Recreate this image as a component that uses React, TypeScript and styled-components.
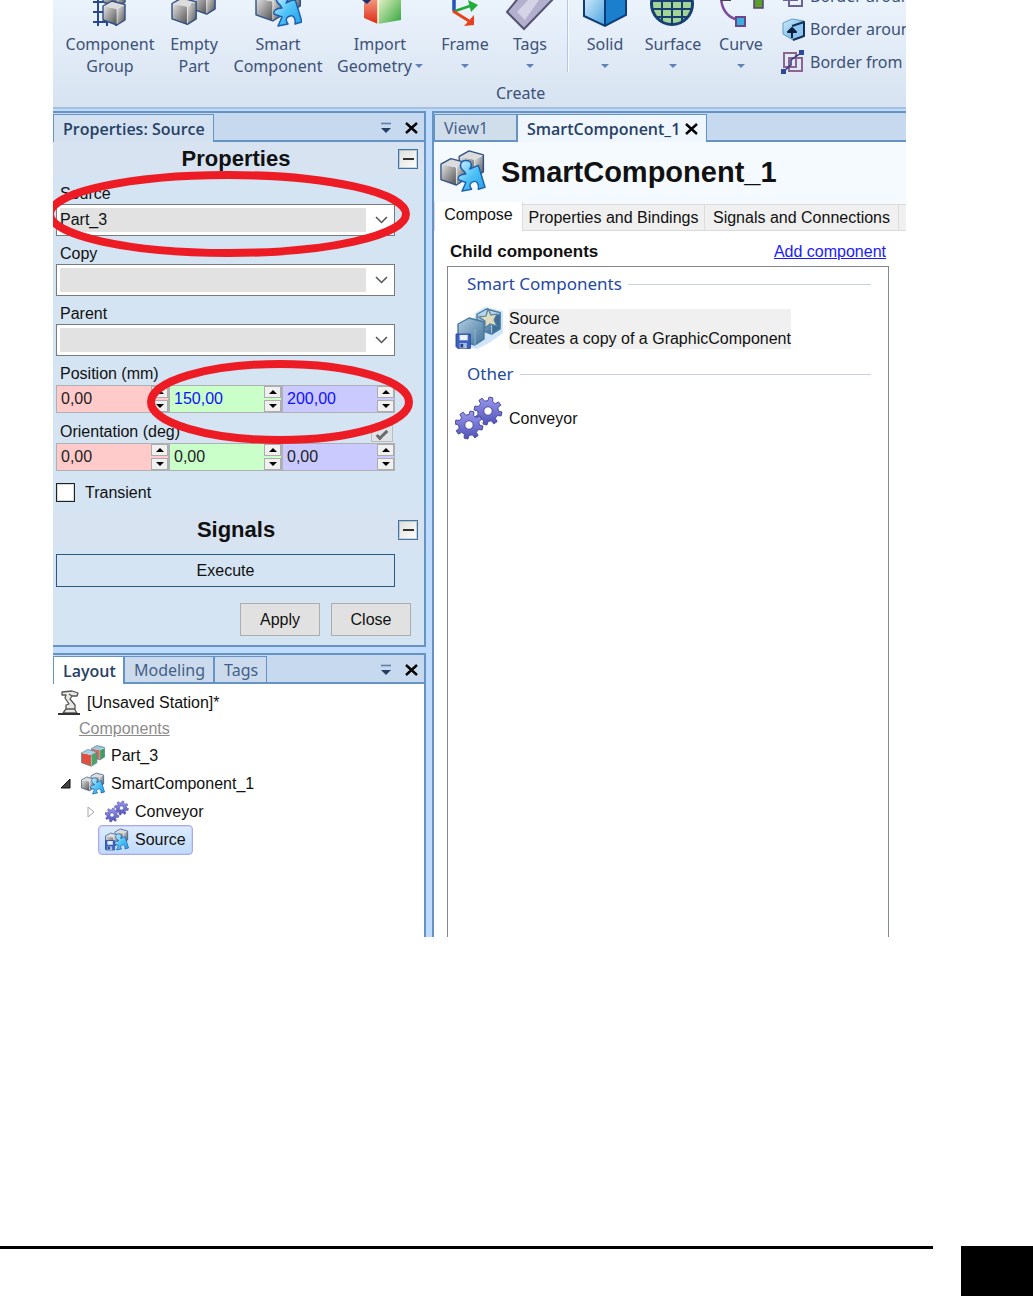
import React from "react";
import styled, { createGlobalStyle } from "styled-components";

const ui = '"Liberation Sans", Arial, sans-serif';
const ribbonFont = '"Noto Sans", "Open Sans", sans-serif';
const edge = "#6593c4";

const Global = createGlobalStyle`
  *, *::before, *::after { box-sizing: border-box; }
  body { margin: 0; background: #fff; color: #111; font: 16px/20px ${ui}; }
  button, input, select { font: inherit; color: inherit; margin: 0; }
  button { padding: 0; border: 0; background: none; }
  svg { display: block; flex: none; }
`;

const Page = styled.div`
  min-height: 100vh;
  display: flex;
  flex-direction: column;
  justify-content: space-between;
`;
const Shot = styled.main`
  margin: 0 127px 0 53px;
  overflow: hidden;
  background: #bfdbff;
`;

/* ---------- ribbon ---------- */
const Ribbon = styled.header`
  height: 109px;
  border-bottom: 2px solid #a9bfdb;
  background: linear-gradient(#ebf3fc, #d7e3f1);
  font: 16px/22px ${ribbonFont};
  color: #3c5178;
`;
const RibbonItems = styled.div`
  display: flex;
  gap: 12px;
  height: 82px;
  padding-left: 12px;
`;
const RibbonButton = styled.button<{ $w: number }>`
  flex: none;
  display: flex;
  flex-direction: column;
  align-items: center;
  width: ${(p) => p.$w}px;
  white-space: nowrap;
`;
const RibbonLine = styled.span`
  display: flex;
  align-items: center;
  gap: 3px;
  height: 22px;
`;
const Separator = styled.div`
  width: 2px;
  height: 72px;
  flex: none;
  background: linear-gradient(90deg, #b4c6e0 50%, #f6faff 50%);
`;
const BorderList = styled.div`
  display: flex;
  flex-direction: column;
  justify-content: flex-end;
  padding: 0 0 4px 4px;
`;
const BorderButton = styled.button`
  flex: none;
  display: flex;
  align-items: center;
  gap: 5px;
  height: 33px;
  white-space: nowrap;
`;
const RibbonCaption = styled.div`
  padding-left: 443px;
`;

/* ---------- docked panels ---------- */
const Workspace = styled.div`
  display: flex;
  gap: 6px;
  padding-top: 2px;
`;
const LeftDock = styled.div`
  flex: none;
  width: 373px;
  display: flex;
  flex-direction: column;
  gap: 6px;
`;
const Panel = styled.section<{ $grow?: boolean }>`
  position: relative;
  flex: ${(p) => (p.$grow ? 1 : "none")};
  border: 2px solid ${edge};
  border-width: ${(p) => (p.$grow ? "2px 2px 0 0" : "2px 2px 2px 0")};
  background: ${(p) => (p.$grow ? "#fff" : "#d4e4f3")};
`;
const Strip = styled.div`
  display: flex;
  align-items: flex-end;
  height: 29px;
  border-bottom: 2px solid ${edge};
  background: #c7d9ee;
  font: 16px/24px ${ribbonFont};
  color: #465f88;
`;
const DockTab = styled.button<{ $active?: boolean; $w?: number; $tint?: string }>`
  display: flex;
  align-items: center;
  gap: 5px;
  margin-bottom: ${(p) => (p.$active ? "-2px" : "0")};
  padding: 0 8px 0 9px;
  height: ${(p) => (p.$active ? 28 : 26)}px;
  width: ${(p) => (p.$w ? p.$w + "px" : "auto")};
  border: 1px solid ${edge};
  border-bottom: 0;
  background: ${(p) => p.$tint || "#cbdbed"};
  font-family: ${(p) => (p.$active ? '"Open Sans", sans-serif' : "inherit")};
  font-weight: ${(p) => (p.$active ? 600 : 400)};
  color: ${(p) => (p.$active ? "#274166" : "#465f88")};
  white-space: nowrap;
  & + & { border-left-width: ${(p) => (p.$active ? 1 : 0)}px; }
`;
const StripTools = styled.div`
  display: flex;
  align-items: center;
  gap: 13px;
  height: 25px;
  margin-left: auto;
  padding-right: 6px;
`;

/* ---------- property form ---------- */
const SectionHead = styled.div`
  display: grid;
  grid-template-columns: 1fr 20px;
  align-items: center;
  height: 34px;
  padding-right: 6px;
  background: #d8e3f2;
`;
const SectionTitle = styled.h2`
  margin: 0;
  padding-left: 21px;
  text-align: center;
  font: bold 22px/30px ${ui};
`;
const Collapse = styled.button`
  width: 20px;
  height: 20px;
  display: grid;
  place-items: center;
  border: 1px solid #3f74a5;
  outline: 1px solid #3f74a544;
  outline-offset: -2px;
  background: linear-gradient(135deg, #dededa, #fff);
`;
const Form = styled.div`
  padding: 0 29px 0 3px;
`;
const FieldLabel = styled.label`
  display: block;
  height: 28px;
  padding: 8px 4px 0;
`;
const LabelRow = styled.div`
  display: flex;
  justify-content: space-between;
  align-items: flex-end;
  height: 28px;
  padding-right: 2px;
`;
const ComboFrame = styled.div`
  display: flex;
  align-items: center;
  height: 32px;
  padding: 2px 6px 2px 3px;
  border: 1px solid #7a7a7a;
  background: #fff;
`;
const Combo = styled.select`
  appearance: none;
  flex: 1;
  min-width: 0;
  height: 24px;
  margin-right: 9px;
  padding: 0;
  border: 0;
  border-radius: 0;
  background: #e2e2e2;
`;
const Triple = styled.div`
  display: grid;
  grid-template-columns: repeat(3, 1fr);
  height: 30px;
  padding: 1px 0;
`;
const Spin = styled.div<{ $bg: string }>`
  display: flex;
  border: 1px solid #aeb0b2;
  background: ${(p) => p.$bg};
`;
const SpinInput = styled.input<{ $blue?: boolean }>`
  flex: 1;
  width: 0;
  padding: 0 0 0 4px;
  border: 0;
  background: transparent;
  color: ${(p) => (p.$blue ? "#1010ff" : "#222")};
`;
const SpinButtons = styled.div`
  display: flex;
  flex-direction: column;
  justify-content: space-between;
  width: 17px;
`;
const SpinButton = styled.button`
  display: grid;
  place-items: center;
  height: 12px;
  border: 1px solid #acacac;
  background: #f0f0f0;
`;
const Check = styled.input`
  appearance: none;
  width: 19px;
  height: 19px;
  border: 1px solid #222;
  outline: 1px solid #8b8b8b55;
  outline-offset: -2px;
  background: #fff;
`;
const LockCheck = styled.input`
  appearance: none;
  width: 22px;
  height: 17px;
  border: 1px solid #bcbcbc;
  background: #dfe3e8;
  display: grid;
  place-items: center;
  &::after {
    content: "";
    width: 12px;
    height: 6px;
    border: solid #6b6b6b;
    border-width: 0 0 3px 3px;
    transform: rotate(-45deg);
  }
`;
const CheckRow = styled.label`
  display: flex;
  align-items: center;
  gap: 10px;
  height: 41px;
`;
const Execute = styled.button`
  display: block;
  width: 100%;
  height: 33px;
  margin-top: 7px;
  border: 1px solid #2b5a86;
  background: #d4e4f3;
`;
const Actions = styled.div`
  display: flex;
  justify-content: flex-end;
  gap: 11px;
  padding: 16px 13px 9px;
`;
const PushButton = styled.button`
  width: 80px;
  height: 33px;
  border: 1px solid #adadad;
  background: #e1e1e1;
`;
const Marker = styled.svg<{ $x: number; $y: number }>`
  position: absolute;
  left: ${(p) => p.$x}px;
  top: ${(p) => p.$y}px;
  pointer-events: none;
`;

/* ---------- layout tree ---------- */
const Tree = styled.ul`
  list-style: none;
  margin: 0;
  padding: 6px 0 83px;
`;
const Node = styled.li<{ $indent: number; $h?: number }>`
  display: flex;
  align-items: center;
  gap: 6px;
  height: ${(p) => p.$h || 28}px;
  padding-left: ${(p) => p.$indent}px;
`;
const Heading = styled.span`
  color: #8c8c8c;
  text-decoration: underline;
`;
const Selected = styled.span`
  display: flex;
  align-items: center;
  gap: 6px;
  height: 30px;
  padding: 0 6px;
  border: 1px solid #a9a9f2;
  outline: 1px solid #b3b3f566;
  outline-offset: -2px;
  border-radius: 4px;
  background: linear-gradient(#dcebfc, #c1dbfc);
`;

/* ---------- smart component editor ---------- */
const Editor = styled.section`
  flex: 1;
  min-width: 0;
  display: flex;
  flex-direction: column;
  border: 2px solid ${edge};
  border-width: 2px 0 0 2px;
  background: #fff;
`;
const TitleBar = styled.div`
  display: flex;
  align-items: center;
  gap: 15px;
  height: 60px;
  padding-left: 6px;
  background: #f5faff;
`;
const Title = styled.h1`
  margin: 0;
  font: bold 29px/36px ${ui};
`;
const Tabs = styled.div`
  display: flex;
  align-items: flex-end;
  height: 29px;
  overflow: hidden;
  background: #f5faff;
`;
const Tab = styled.button<{ $active?: boolean; $w: number }>`
  flex: none;
  width: ${(p) => p.$w}px;
  height: ${(p) => (p.$active ? 31 : 27)}px;
  padding-bottom: ${(p) => (p.$active ? 2 : 0)}px;
  border: 1px solid #dcdcdc;
  border-left-width: ${(p) => (p.$active ? 1 : 0)}px;
  border-bottom-width: ${(p) => (p.$active ? 0 : 1)}px;
  background: ${(p) => (p.$active ? "#fff" : "#f0f0f0")};
  white-space: nowrap;
`;
const ChildHead = styled.div`
  display: flex;
  justify-content: space-between;
  align-items: center;
  height: 35px;
  padding: 6px 20px 0 16px;
`;
const ChildTitle = styled.h3`
  margin: 0;
  font: bold 17px/20px ${ui};
`;
const AddLink = styled.a`
  color: #1a1aff;
`;
const ListBox = styled.div`
  flex: 1;
  margin: 0 17px 0 13px;
  padding: 6px 17px 0 7px;
  border: 1px solid #828790;
  border-bottom: 0;
`;
const GroupName = styled.div`
  display: flex;
  align-items: center;
  gap: 6px;
  height: 22px;
  padding-left: 12px;
  font: 17px/22px ${ribbonFont};
  color: #2449a3;
  &::after {
    content: "";
    flex: 1;
    height: 1px;
    background: #c5d1e8;
  }
`;
const Entry = styled.div`
  display: flex;
  align-items: center;
  gap: 6px;
  height: 68px;
`;
const EntryText = styled.div<{ $on?: boolean }>`
  background: ${(p) => (p.$on ? "#f0f0f0" : "transparent")};
  white-space: nowrap;
`;

/* ---------- page footer ---------- */
const Footer = styled.footer`
  display: flex;
  gap: 28px;
`;
const Rule = styled.div`
  flex: 1;
  height: 3px;
  background: #000;
`;
const PageMark = styled.div`
  width: 72px;
  height: 50px;
  background: #000;
`;

/* ---------- drawings ---------- */
const DefsSvg = styled.svg`
  position: absolute;
`;
const Defs = () => (
  <DefsSvg width="0" height="0" aria-hidden="true">
    <defs>
      <linearGradient id="grey" x1="0" y1="0" x2="1" y2="1">
        <stop offset="0" stopColor="#e6e6e6" />
        <stop offset="1" stopColor="#505050" />
      </linearGradient>
      <linearGradient id="cyan" x1="0" y1="0" x2="1" y2="1">
        <stop offset="0" stopColor="#d8f4ff" />
        <stop offset=".5" stopColor="#4fc2f7" />
        <stop offset="1" stopColor="#1f9fe8" />
      </linearGradient>
      <linearGradient id="steel" x1="0" y1="0" x2="1" y2="1">
        <stop offset="0" stopColor="#b4cfe2" />
        <stop offset="1" stopColor="#40719a" />
      </linearGradient>
      <linearGradient id="sky" x1="0" y1="0" x2="1" y2="1">
        <stop offset="0" stopColor="#d4ecfb" />
        <stop offset="1" stopColor="#4aa3e0" />
      </linearGradient>
      <linearGradient id="red" x1="0" y1="0" x2="0" y2="1">
        <stop offset="0" stopColor="#f3a78c" />
        <stop offset="1" stopColor="#dd2a14" />
      </linearGradient>
      <linearGradient id="green" x1="0" y1="0" x2="1" y2="1">
        <stop offset="0" stopColor="#f2f6cf" />
        <stop offset="1" stopColor="#2ea53c" />
      </linearGradient>
      <linearGradient id="violet" x1="0" y1="0" x2="0" y2="1">
        <stop offset="0" stopColor="#9a9af0" />
        <stop offset="1" stopColor="#5151b8" />
      </linearGradient>
    </defs>
  </DefsSvg>
);

type CubeProps = { x: number; y: number; s: number; left?: string; right?: string; top?: string; line?: string };
const Cube = ({ x, y, s, left = "url(#grey)", right = "url(#grey)", top = "#dcdcdc", line = "#2f4f86" }: CubeProps) => (
  <g transform={`translate(${x} ${y}) scale(${s})`} stroke={line} strokeWidth={1.4 / s} strokeLinejoin="round">
    <path d="M0 5L14 8V24L0 19Z" fill={left} strokeWidth="0" />
    <path d="M14 8L22 4V19L14 24Z" fill={right} strokeWidth="0" />
    <path d="M0 5L9 0L22 3L14 8Z" fill={top} strokeWidth="0" />
    <path d="M14 8V24" stroke="#ffffff88" strokeWidth={1 / s} />
    <path d="M0 5L9 0L22 3.5V19L14 24L0 19Z" fill="none" />
  </g>
);

const Puzzle = () => (
  <path
    d="M25 22C20 19 20 11 27 11C33 11 34 16 31 20L40 16L47 39L40 41C41 35 38 32 35 33C31 34 30 37 33 41L23 43L27 34L19 31C18 28 21 25 27 25Z"
    fill="url(#cyan)"
    stroke="#1d5fae"
    strokeWidth="1.5"
    strokeLinejoin="round"
  />
);

const Disk = ({ x, y, s = 1 }: { x: number; y: number; s?: number }) => (
  <g transform={`translate(${x} ${y}) scale(${s})`}>
    <path d="M0 0H16V16H2L0 14Z" fill="#3b62bd" stroke="#2746a0" />
    <path d="M4 1H13V7H4Z" fill="#e9f0ff" />
    <path d="M4 10H12V16H4Z" fill="#a9bddf" />
    <path d="M5 11H8V15H5Z" fill="#27407f" />
  </g>
);

const SmartIcon = ({ size, disk }: { size: number; disk?: boolean }) => (
  <svg width={size} height={size} viewBox="0 0 48 46" aria-hidden="true">
    <Cube x={20} y={1} s={1.15} />
    <Cube x={1} y={9} s={1.15} />
    <Puzzle />
    {disk && <Disk x={0} y={24} s={1.2} />}
  </svg>
);

const gearPath = (cx: number, cy: number, r: number) => {
  const n = 8;
  const pts: string[] = [];
  for (let i = 0; i < n; i++) {
    const a = (i / n) * Math.PI * 2;
    const w = (Math.PI * 2) / n;
    [[0, 0.74], [0.1, 1], [0.46, 1], [0.58, 0.74]].forEach(([t, k]) => {
      pts.push(`${(cx + Math.cos(a + t * w) * r * k).toFixed(1)} ${(cy + Math.sin(a + t * w) * r * k).toFixed(1)}`);
    });
  }
  const h = r * 0.3;
  return `M${pts.join("L")}ZM${cx - h} ${cy}a${h} ${h} 0 1 0 ${2 * h} 0a${h} ${h} 0 1 0 ${-2 * h} 0Z`;
};
const Gears = ({ size }: { size: number }) => (
  <svg width={size} height={size} viewBox="0 0 48 48" aria-hidden="true">
    <g fill="url(#violet)" fillRule="evenodd" stroke="#4a4a9c" strokeWidth="1">
      <path d={gearPath(33, 16, 14)} />
      <path d={gearPath(14, 30, 14)} />
    </g>
  </svg>
);

const SourceIcon = () => (
  <svg width="48" height="44" viewBox="0 0 48 44" aria-hidden="true">
    <path d="M20 6L30 0L48 4V26L34 36L22 42L14 40Z" fill="#cfe6fa" />
    <Cube x={22} y={2} s={1.05} left="url(#steel)" right="#3f6f99" top="#b9d5e8" line="#47799f" />
    <path d="M3 17L14 11L29 15V32L20 38L3 33Z" fill="url(#steel)" stroke="#47799f" strokeWidth="1.4" strokeLinejoin="round" />
    <path d="M20 22V38" fill="none" stroke="#8fb3cc" />
    <path d="M33 2L36 8L42 7L39 13L42 19L35 17L30 21L30 14L24 10L31 9Z" fill="#dfdcc0" stroke="#55809d" strokeWidth="1.2" />
    <Disk x={1} y={27} s={0.9} />
  </svg>
);

const PartIcon = () => (
  <svg width="24" height="22" viewBox="0 0 48 44" aria-hidden="true">
    <Cube x={21} y={1} s={1.2} left="#e0645a" right="#3f9f63" top="#9fc6dc" line="#4f7f92" />
    <Cube x={1} y={9} s={1.4} left="#e0503f" right="#4aa56b" top="#a9d4e8" line="#4f7f92" />
  </svg>
);

const RobotIcon = () => (
  <svg width="24" height="26" viewBox="0 0 24 26" fill="#e8e8e4" stroke="#555" strokeWidth="1.3" strokeLinejoin="round" aria-hidden="true">
    <path d="M5 2L15 1L21 3L20 6L15 6L13 9L18 15V20L20 23H6L9 19V15L12 14L8 8L9 5L5 5Z" />
    <path d="M12 4L15 6M9 19H18" />
    <path d="M1 24H23" stroke="#333" strokeWidth="2" />
  </svg>
);

const Down = ({ w = 8, fill = "#5f83b8" }: { w?: number; fill?: string }) => (
  <svg width={w} height={w / 2} viewBox="0 0 8 4" aria-hidden="true"><path d="M0 0H8L4 4Z" fill={fill} /></svg>
);
const Cross = () => (
  <svg width="13" height="12" viewBox="0 0 13 12" aria-hidden="true">
    <path d="M1 1L12 11M12 1L1 11" stroke="#000" strokeWidth="2.4" />
  </svg>
);
const DockMenu = () => (
  <svg width="12" height="12" viewBox="0 0 12 12" aria-hidden="true">
    <path d="M1 1.500H11" stroke="#5f7fa8" strokeWidth="1.6" />
    <path d="M1 6H11L6 11Z" fill="#233f66" />
  </svg>
);
const Chevron = () => (
  <svg width="13" height="8" viewBox="0 0 13 8" aria-hidden="true">
    <path d="M1 1L6.500 6.500L12 1" fill="none" stroke="#555" strokeWidth="1.5" />
  </svg>
);

const Big = ({ children }: { children: React.ReactNode }) => (
  <svg width="48" height="33" viewBox="0 0 48 33" aria-hidden="true">{children}</svg>
);
const icons = {
  group: (
    <Big>
      <path d="M12 0V26M21 20V26M30 20V26M7 2H18M7 12H18M7 22H20" stroke="#27488c" strokeWidth="2" fill="none" />
      <Cube x={17} y={-17} s={1} />
      <Cube x={17} y={1} s={1} />
    </Big>
  ),
  empty: (
    <Big>
      <Cube x={22} y={-11} s={1.05} />
      <Cube x={2} y={-2} s={1.1} />
    </Big>
  ),
  smart: (
    <Big>
      <g transform="translate(1 -17)">
        <Cube x={20} y={1} s={1.15} />
        <Cube x={1} y={9} s={1.2} />
        <Puzzle />
      </g>
    </Big>
  ),
  geometry: (
    <Big>
      <path d="M8 -4L22 0V24L8 18Z" fill="url(#red)" />
      <path d="M22 -4H45V20L22 24Z" fill="url(#green)" />
      <path d="M22 0V24" stroke="#fbf7d8" strokeWidth="1.5" />
      <path d="M6 0L11 4L15 0V-2H6Z" fill="#17306f" />
    </Big>
  ),
  frame: (
    <Big>
      <path d="M13 -2V11" stroke="#2351bd" strokeWidth="3.5" />
      <path d="M14 11L29 6" stroke="#1fa838" strokeWidth="2.6" />
      <path d="M27 0L37 5L30 12Z" fill="#1fae38" />
      <path d="M12 11L28 21" stroke="#e8401b" strokeWidth="3" />
      <path d="M33 15L33 25L23 26Z" fill="#e8401b" />
    </Big>
  ),
  tag: (
    <Big>
      <path d="M1 12L14 -4H50L18 29Z" fill="#b3b0cd" stroke="#565372" strokeWidth="2" />
      <path d="M11 12L22 0H33L19 20Z" fill="#d5d3e6" />
    </Big>
  ),
  solid: (
    <Big>
      <path d="M3 -4H24V26L3 16Z" fill="url(#sky)" />
      <path d="M24 -4H45V15L24 26Z" fill="#1b7fcd" />
      <path d="M3 -4V16L24 26L45 15V-4M24 -4V26" fill="none" stroke="#0d3c78" strokeWidth="2" />
    </Big>
  ),
  surface: (
    <Big>
      <circle cx="23" cy="4" r="20.5" fill="#a4d396" stroke="#164073" strokeWidth="3" />
      <path d="M3 1H43M4 9H42M8 17H38M13 -2V22M23 -2V25M33 -2V22" stroke="#164073" strokeWidth="2" fill="none" />
    </Big>
  ),
  curve: (
    <Big>
      <path d="M4 -2C5 12 12 18 22 20" fill="none" stroke="#7b4a9a" strokeWidth="2.5" />
      <path d="M4 0H14" stroke="#444" strokeWidth="2" />
      <path d="M37 -2H46V8H37Z" fill="#57a02c" stroke="#5b3f78" strokeWidth="1.5" />
      <path d="M19 17H28V26H19Z" fill="#3badd9" stroke="#6a4590" strokeWidth="2" />
    </Big>
  ),
};

const Overlap = () => (
  <svg width="24" height="24" viewBox="0 0 24 24" fill="none" stroke="#6d6296" strokeWidth="2" aria-hidden="true">
    <path d="M3 3H16V16H3ZM8 8H21V22H8Z" />
  </svg>
);
const BorderCube = () => (
  <svg width="24" height="24" viewBox="0 0 24 24" strokeLinejoin="round" aria-hidden="true">
    <path d="M2 6L11 2L23 4V19L12 23L2 17Z" fill="url(#sky)" stroke="#5b9ccc" />
    <path d="M11 9L23 5V19L12 23" fill="#8ec4ee" stroke="#132f55" strokeWidth="2" />
    <path d="M11 21V14M7 15L11 11L15 15Z" fill="#0c2040" stroke="#0c2040" strokeWidth="2" />
  </svg>
);
const BorderPoints = () => (
  <svg width="24" height="24" viewBox="0 0 24 24" fill="none" aria-hidden="true">
    <path d="M3 3H15V17H3ZM8 8H21V21H8Z" stroke="#8d6490" strokeWidth="2" />
    <path d="M3 21L10 15V10L20 3" stroke="#2b3480" strokeWidth="1.5" />
    <path d="M0 19H5V24H0ZM18 0H23V5H18Z" fill="#2b4a9a" />
  </svg>
);

/* ---------- composition ---------- */
type Item = { icon: keyof typeof icons; w: number; a: string; b?: string; menu?: boolean };
const firstItems: Item[] = [
  { icon: "group", w: 90, a: "Component", b: "Group" },
  { icon: "empty", w: 54, a: "Empty", b: "Part" },
  { icon: "smart", w: 90, a: "Smart", b: "Component" },
  { icon: "geometry", w: 90, a: "Import", b: "Geometry", menu: true },
  { icon: "frame", w: 56, a: "Frame", menu: true },
  { icon: "tag", w: 50, a: "Tags", menu: true },
];
const moreItems: Item[] = [
  { icon: "solid", w: 48, a: "Solid", menu: true },
  { icon: "surface", w: 64, a: "Surface", menu: true },
  { icon: "curve", w: 48, a: "Curve", menu: true },
];
const renderItem = (i: Item) => (
  <RibbonButton key={i.icon} $w={i.w}>
    {icons[i.icon]}
    <RibbonLine>{i.a}</RibbonLine>
    <RibbonLine>
      {i.b}
      {i.menu && <Down />}
    </RibbonLine>
  </RibbonButton>
);

const ComboField = ({ id, label, value }: { id: string; label: string; value: string }) => (
  <>
    <FieldLabel htmlFor={id}>{label}</FieldLabel>
    <ComboFrame>
      <Combo id={id} defaultValue={value}>
        <option value={value}>{value}</option>
      </Combo>
      <Chevron />
    </ComboFrame>
  </>
);

const axes = ["X", "Y", "Z"];
const tints = ["#ffcaca", "#caffca", "#cacaff"];
const Vector = ({ id, name, values, edited }: { id: string; name: string; values: string[]; edited?: boolean }) => (
  <Triple>
    {values.map((v, i) => (
      <Spin key={i} $bg={tints[i]}>
        <SpinInput id={`${id}-${i}`} aria-label={`${name} ${axes[i]}`} defaultValue={v} $blue={edited && i > 0} />
        <SpinButtons>
          <SpinButton aria-label="Increase">
            <svg width="8" height="4" viewBox="0 0 8 4"><path d="M0 4H8L4 0Z" /></svg>
          </SpinButton>
          <SpinButton aria-label="Decrease"><Down fill="#000" /></SpinButton>
        </SpinButtons>
      </Spin>
    ))}
  </Triple>
);

const Section = ({ title }: { title: string }) => (
  <SectionHead>
    <SectionTitle>{title}</SectionTitle>
    <Collapse aria-label={`Collapse ${title}`}>
      <svg width="11" height="2" viewBox="0 0 11 2"><path d="M0 0H11V2H0Z" fill="#333" /></svg>
    </Collapse>
  </SectionHead>
);

const Tools = () => (
  <StripTools>
    <button aria-label="Window options"><DockMenu /></button>
    <button aria-label="Close window"><Cross /></button>
  </StripTools>
);

const Ring = ({ x, y, rx, ry }: { x: number; y: number; rx: number; ry: number }) => (
  <Marker $x={x} $y={y} width={rx * 2} height={ry * 2} aria-hidden="true">
    <ellipse cx={rx} cy={ry} rx={rx - 4} ry={ry - 4} fill="none" stroke="#ed1c24" strokeWidth="8" />
  </Marker>
);

export default function App() {
  return (
    <Page>
      <Global />
      <Defs />
      <Shot>
        <Ribbon>
          <RibbonItems>
            {firstItems.map(renderItem)}
            <Separator />
            {moreItems.map(renderItem)}
            <BorderList>
              <BorderButton><Overlap />Border around</BorderButton>
              <BorderButton><BorderCube />Border around</BorderButton>
              <BorderButton><BorderPoints />Border from P</BorderButton>
            </BorderList>
          </RibbonItems>
          <RibbonCaption>Create</RibbonCaption>
        </Ribbon>

        <Workspace>
          <LeftDock>
            <Panel>
              <Strip>
                <DockTab $active $w={161} $tint="#d3e1f1">Properties: Source</DockTab>
                <Tools />
              </Strip>
              <Section title="Properties" />
              <Form>
                <ComboField id="source" label="Source" value="Part_3" />
                <ComboField id="copy" label="Copy" value="" />
                <ComboField id="parent" label="Parent" value="" />
                <FieldLabel htmlFor="pos-0">Position (mm)</FieldLabel>
                <Vector id="pos" name="Position" values={["0,00", "150,00", "200,00"]} edited />
                <LabelRow>
                  <FieldLabel htmlFor="rot-0">Orientation (deg)</FieldLabel>
                  <LockCheck type="checkbox" aria-label="Lock orientation" defaultChecked disabled />
                </LabelRow>
                <Vector id="rot" name="Orientation" values={["0,00", "0,00", "0,00"]} />
                <CheckRow>
                  <Check type="checkbox" />
                  Transient
                </CheckRow>
              </Form>
              <Section title="Signals" />
              <Form>
                <Execute>Execute</Execute>
              </Form>
              <Actions>
                <PushButton>Apply</PushButton>
                <PushButton>Close</PushButton>
              </Actions>
              <Ring x={-7} y={58} rx={182} ry={43} />
              <Ring x={94} y={247} rx={133} ry={42} />
            </Panel>

            <Panel $grow>
              <Strip>
                <DockTab $active $w={71} $tint="#fff">Layout</DockTab>
                <DockTab>Modeling</DockTab>
                <DockTab>Tags</DockTab>
                <Tools />
              </Strip>
              <Tree>
                <Node $indent={4} $h={26}><RobotIcon />[Unsaved Station]*</Node>
                <Node $indent={26} $h={26}><Heading>Components</Heading></Node>
                <Node $indent={28}><PartIcon />Part_3</Node>
                <Node $indent={7}>
                  <svg width="15" height="10" viewBox="0 0 15 10"><path d="M10 0V9H1Z" fill="#444" stroke="#111" /></svg>
                  <SmartIcon size={24} />SmartComponent_1
                </Node>
                <Node $indent={34}>
                  <svg width="12" height="12" viewBox="0 0 12 12"><path d="M1 1L7 6L1 11Z" fill="#fff" stroke="#a5a5a5" /></svg>
                  <Gears size={24} />Conveyor
                </Node>
                <Node $indent={45}><Selected><SmartIcon size={24} disk />Source</Selected></Node>
              </Tree>
            </Panel>
          </LeftDock>

          <Editor>
            <Strip>
              <DockTab $w={83} $tint="#d0deec">View1</DockTab>
              <DockTab $active $w={190} $tint="#eff6fd">SmartComponent_1<Cross /></DockTab>
            </Strip>
            <TitleBar>
              <SmartIcon size={46} />
              <Title>SmartComponent_1</Title>
            </TitleBar>
            <Tabs>
              <Tab $active $w={89}>Compose</Tab>
              <Tab $w={182}>Properties and Bindings</Tab>
              <Tab $w={194}>Signals and Connections</Tab>
              <Tab $w={60} aria-label="Design" />
            </Tabs>
            <ChildHead>
              <ChildTitle>Child components</ChildTitle>
              <AddLink href="#add">Add component</AddLink>
            </ChildHead>
            <ListBox>
              <GroupName>Smart Components</GroupName>
              <Entry>
                <SourceIcon />
                <EntryText $on>Source<br />Creates a copy of a GraphicComponent</EntryText>
              </Entry>
              <GroupName>Other</GroupName>
              <Entry>
                <Gears size={48} />
                <EntryText>Conveyor</EntryText>
              </Entry>
            </ListBox>
          </Editor>
        </Workspace>
      </Shot>
      <Footer>
        <Rule />
        <PageMark />
      </Footer>
    </Page>
  );
}
